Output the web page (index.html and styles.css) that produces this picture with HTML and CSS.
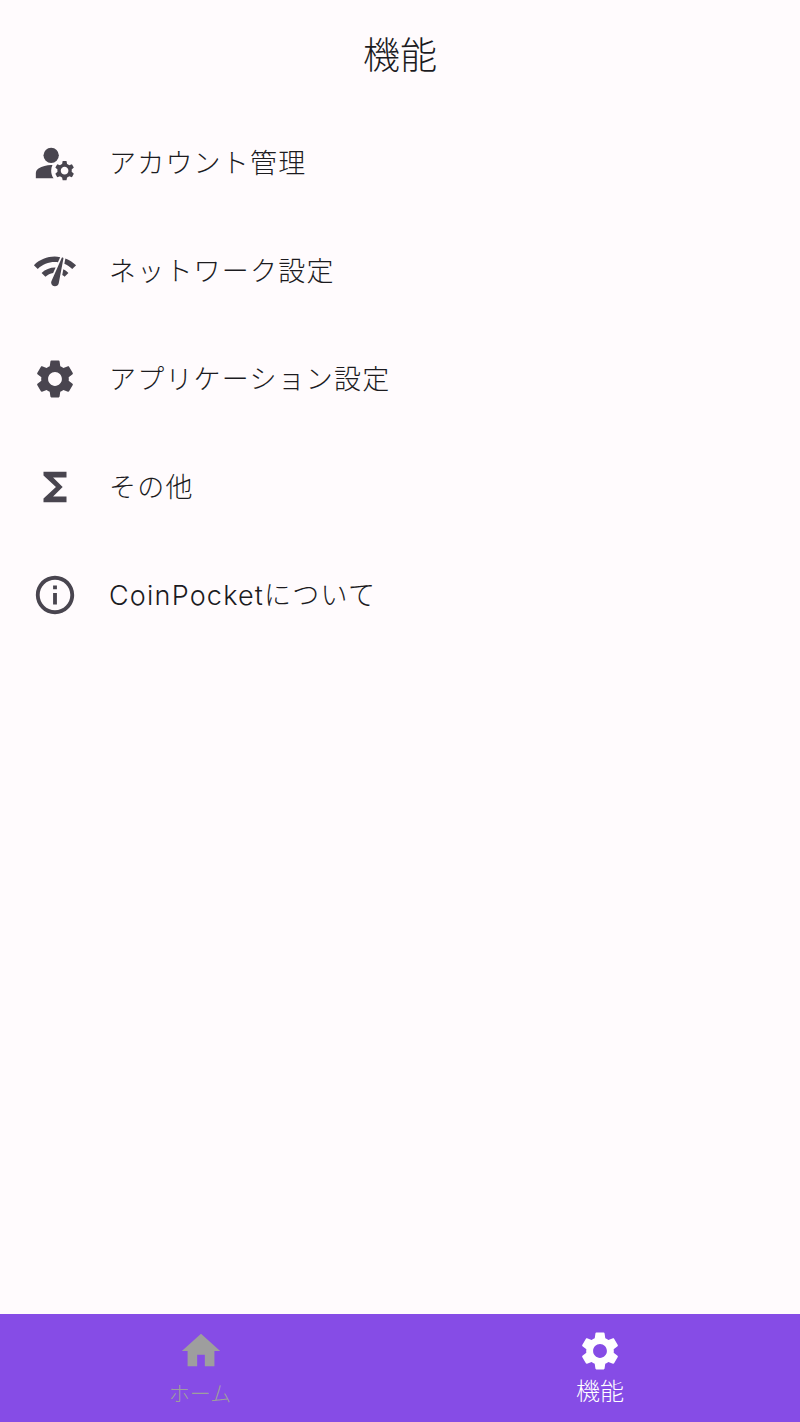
FILE: index.html
```html
<!DOCTYPE html>
<html lang="ja">
<head>
  <meta charset="UTF-8">
  <meta name="viewport" content="width=device-width, initial-scale=1.0">
  <title>機能</title>
  <link rel="stylesheet" href="styles.css">
</head>
<body>

  <div class="page">
    <header class="title-bar">機能</header>

    <ul class="menu">
      <li class="menu-item">
        <svg class="icon" viewBox="0 0 24 24"><circle cx="10" cy="8" r="4"/><path d="M10.67,13.02C10.45,13.01,10.23,13,10,13c-2.42,0-4.68,0.67-6.61,1.82C2.51,15.34,2,16.32,2,17.35V20h9.26C10.47,18.87,10,17.49,10,16C10,14.93,10.25,13.93,10.67,13.02z"/><path d="M20.75,16c0-0.22-0.03-0.42-0.06-0.63l1.14-1.01l-1-1.73l-1.45,0.49c-0.32-0.27-0.68-0.48-1.08-0.63L18,11h-2l-0.3,1.49c-0.4,0.15-0.76,0.36-1.08,0.63l-1.45-0.49l-1,1.73l1.14,1.01c-0.03,0.21-0.06,0.41-0.06,0.63s0.03,0.42,0.06,0.63l-1.14,1.01l1,1.73l1.45-0.49c0.32,0.27,0.68,0.48,1.08,0.63L16,21h2l0.3-1.49c0.4-0.15,0.76-0.36,1.08-0.63l1.45,0.49l1-1.73l-1.14-1.01C20.72,16.42,20.75,16.22,20.75,16z M17,18c-1.1,0-2-0.9-2-2s0.9-2,2-2s2,0.9,2,2S18.1,18,17,18z"/></svg>
        <span class="menu-label">アカウント管理</span>
      </li>
      <li class="menu-item">
        <svg class="icon" viewBox="0 0 24 24"><path d="M15.9 5c-.17 0-.32.09-.41.23l-.07.15-5.18 11.65c-.16.29-.26.61-.26.96 0 1.11.9 2.01 2.01 2.01.96 0 1.77-.68 1.96-1.59l.01-.03L16.4 5.5c0-.28-.22-.5-.5-.5zM1 9l2 2c2.88-2.88 6.79-4.06 10.53-3.54l1.19-2.68C9.89 3.84 4.74 5.27 1 9zm20 2l2-2c-1.64-1.64-3.55-2.82-5.59-3.57l-.53 2.82c1.5.62 2.9 1.53 4.12 2.75zm-4 4l2-2c-.8-.8-1.7-1.42-2.66-1.89l-.55 2.92c.42.27.83.59 1.21.97zM5 13l2 2c1.13-1.13 2.56-1.79 4.03-2l1.28-2.88c-2.63-.08-5.3.87-7.31 2.88z"/></svg>
        <span class="menu-label">ネットワーク設定</span>
      </li>
      <li class="menu-item">
        <svg class="icon" viewBox="0 0 24 24"><path d="M19.14,12.94c0.04-0.3,0.06-0.61,0.06-0.94c0-0.32-0.02-0.64-0.07-0.94l2.03-1.58c0.18-0.14,0.23-0.41,0.12-0.61l-1.92-3.32c-0.12-0.22-0.37-0.29-0.59-0.22l-2.39,0.96c-0.5-0.38-1.03-0.7-1.62-0.94L14.4,2.81c-0.04-0.24-0.24-0.41-0.48-0.41h-3.84c-0.24,0-0.43,0.17-0.47,0.41L9.25,5.35C8.66,5.59,8.12,5.92,7.63,6.29L5.24,5.33c-0.22-0.08-0.47,0-0.59,0.22L2.74,8.87C2.62,9.08,2.66,9.34,2.86,9.48l2.03,1.58C4.84,11.36,4.8,11.69,4.8,12s0.02,0.64,0.07,0.94l-2.03,1.58c-0.18,0.14-0.23,0.41-0.12,0.61l1.92,3.32c0.12,0.22,0.37,0.29,0.59,0.22l2.39-0.96c0.5,0.38,1.03,0.7,1.62,0.94l0.36,2.54c0.05,0.24,0.24,0.41,0.48,0.41h3.84c0.24,0,0.44-0.17,0.47-0.41l0.36-2.54c0.59-0.24,1.13-0.56,1.62-0.94l2.39,0.96c0.22,0.08,0.47,0,0.59-0.22l1.92-3.32c0.12-0.22,0.07-0.47-0.12-0.61L19.14,12.94z M12,15.6c-1.98,0-3.6-1.62-3.6-3.6s1.62-3.6,3.6-3.6s3.6,1.62,3.6,3.6S13.98,15.6,12,15.6z"/></svg>
        <span class="menu-label">アプリケーション設定</span>
      </li>
      <li class="menu-item">
        <svg class="icon" viewBox="0 0 24 24"><path d="M18 4H6v2l6.5 6L6 18v2h12v-3h-7l5-5-5-5h7z"/></svg>
        <span class="menu-label">その他</span>
      </li>
      <li class="menu-item">
        <svg class="icon" viewBox="0 0 24 24"><path d="M11 7h2v2h-2zm0 4h2v6h-2zm1-9C6.48 2 2 6.48 2 12s4.48 10 10 10 10-4.48 10-10S17.52 2 12 2zm0 18c-4.41 0-8-3.59-8-8s3.59-8 8-8 8 3.59 8 8-3.59 8-8 8z"/></svg>
        <span class="menu-label">CoinPocketについて</span>
      </li>
    </ul>

    <nav class="bottom-nav">
      <div class="nav-item">
        <svg class="nav-icon" viewBox="0 0 24 24"><path d="M10 20v-6h4v6h5v-8h3L12 3 2 12h3v8z"/></svg>
        <span class="nav-label">ホーム</span>
      </div>
      <div class="nav-item active">
        <svg class="nav-icon" viewBox="0 0 24 24"><path d="M19.14,12.94c0.04-0.3,0.06-0.61,0.06-0.94c0-0.32-0.02-0.64-0.07-0.94l2.03-1.58c0.18-0.14,0.23-0.41,0.12-0.61l-1.92-3.32c-0.12-0.22-0.37-0.29-0.59-0.22l-2.39,0.96c-0.5-0.38-1.03-0.7-1.62-0.94L14.4,2.81c-0.04-0.24-0.24-0.41-0.48-0.41h-3.84c-0.24,0-0.43,0.17-0.47,0.41L9.25,5.35C8.66,5.59,8.12,5.92,7.63,6.29L5.24,5.33c-0.22-0.08-0.47,0-0.59,0.22L2.74,8.87C2.62,9.08,2.66,9.34,2.86,9.48l2.03,1.58C4.84,11.36,4.8,11.69,4.8,12s0.02,0.64,0.07,0.94l-2.03,1.58c-0.18,0.14-0.23,0.41-0.12,0.61l1.92,3.32c0.12,0.22,0.37,0.29,0.59,0.22l2.39-0.96c0.5,0.38,1.03,0.7,1.62,0.94l0.36,2.54c0.05,0.24,0.24,0.41,0.48,0.41h3.84c0.24,0,0.44-0.17,0.47-0.41l0.36-2.54c0.59-0.24,1.13-0.56,1.62-0.94l2.39,0.96c0.22,0.08,0.47,0,0.59-0.22l1.92-3.32c0.12-0.22,0.07-0.47-0.12-0.61L19.14,12.94z M12,15.6c-1.98,0-3.6-1.62-3.6-3.6s1.62-3.6,3.6-3.6s3.6,1.62,3.6,3.6S13.98,15.6,12,15.6z"/></svg>
        <span class="nav-label">機能</span>
      </div>
    </nav>
  </div>

</body>
</html>
```

FILE: styles.css
```css
body{
  margin: 0;
  background-color: #fffbfd;
  color: #1c1b1f;
  font-family: "Inter", "Noto Sans CJK JP", sans-serif;
  font-weight: 300;
}

.page{
  display: flex;
  flex-direction: column;
  height: 100vh;
}

.title-bar{
  height: 108px;
  padding-bottom: 2px;
  box-sizing: border-box;
  display: flex;
  align-items: center;
  justify-content: center;
  font-size: 37px;
}

.menu{
  flex: 1;
  margin: 0;
  padding: 0;
  list-style: none;
}

.menu-item{
  height: 108px;
  padding-left: 32px;
  display: flex;
  align-items: center;
  gap: 31px;
  font-size: 27px;
  letter-spacing: 1.2px;
}

.menu-label{
  padding-bottom: 2px;
}

.icon{
  width: 46px;
  height: 46px;
  margin-top: 2px;
  flex-shrink: 0;
  fill: #49454f;
}

.bottom-nav{
  height: 108px;
  display: flex;
  background-color: #864ce6;
}

.nav-item{
  flex: 1;
  display: flex;
  flex-direction: column;
  align-items: center;
  padding-top: 14px;
  color: #9e9e9e;
  fill: #9e9e9e;
  font-size: 21px;
  line-height: 40px;
}

.nav-item.active{
  color: #fff;
  fill: #fff;
  font-size: 24px;
  line-height: 36px;
}

.nav-icon{
  width: 46px;
  height: 46px;
  margin-left: 2px;
}

.nav-item.active .nav-icon{
  margin-left: 0;
}
```
